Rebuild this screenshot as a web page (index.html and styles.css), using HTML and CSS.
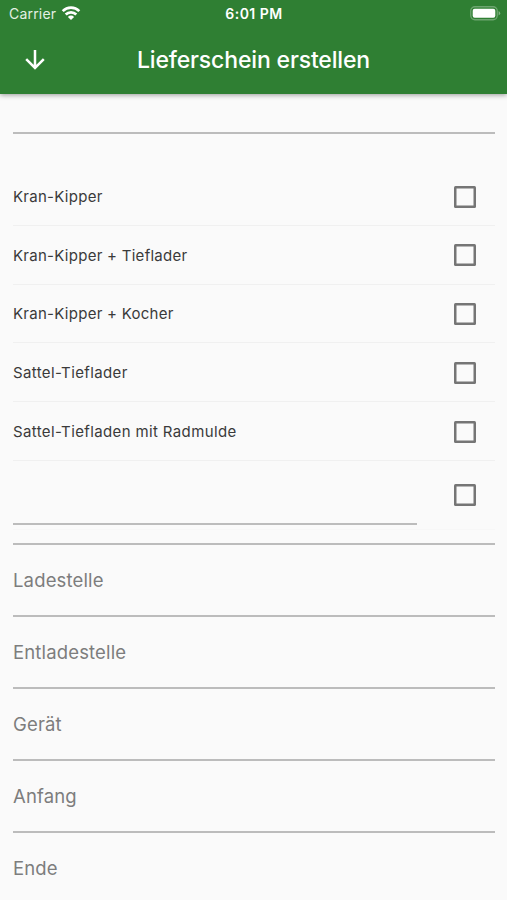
FILE: index.html
```html
<!DOCTYPE html>
<html lang="de">
<head>
<meta charset="utf-8">
<title>Lieferschein erstellen</title>
<link rel="stylesheet" href="styles.css">
</head>
<body>
<header class="appbar">
  <div class="status">
    <div class="network"><span class="carrier">Carrier</span>
      <svg class="wifi" width="20" height="16" viewBox="0 0 20 16"><g fill="none" stroke="#fff" stroke-width="2.7"><path d="M1.7 6.1a11.7 11.7 0 0 1 16.6 0"/><path d="M4.7 9.5a7.5 7.5 0 0 1 10.6 0"/></g><path fill="#fff" d="M10 15l-3.1-3.1a4.4 4.4 0 0 1 6.2 0z"/></svg>
    </div>
    <span class="clock">6:01 PM</span>
    <svg class="battery" width="31" height="15" viewBox="0 0 31 15"><rect x=".75" y=".75" width="26.5" height="13" rx="4.2" fill="none" stroke="#fff" stroke-opacity=".3" stroke-width="1.3"/><rect x="2.7" y="2.7" width="22.6" height="9.1" rx="2" fill="#fff"/><path d="M28.6 5v4.6q1.6-.8 1.6-2.3T28.6 5z" fill="#fff" fill-opacity=".4"/></svg>
  </div>
  <div class="toolbar">
    <svg class="back" width="20" height="20" viewBox="0 0 20 20" fill="none" stroke="#fff" stroke-width="2.5"><path d="M10 0v18M1.2 9.2l8.8 8.8 8.8-8.8"/></svg>
    <h1 class="title">Lieferschein erstellen</h1>
  </div>
</header>
<main class="form">
  <div class="field first"></div>
  <div class="options">
    <label class="option"><span>Kran-Kipper</span><i class="box"></i></label>
    <label class="option"><span>Kran-Kipper + Tieflader</span><i class="box"></i></label>
    <label class="option"><span>Kran-Kipper + Kocher</span><i class="box"></i></label>
    <label class="option wide"><span>Sattel-Tieflader</span><i class="box"></i></label>
    <label class="option wide"><span>Sattel-Tiefladen mit Radmulde</span><i class="box"></i></label>
    <div class="option custom"><div class="entry"></div><i class="box"></i></div>
  </div>
  <div class="field spacer"></div>
  <div class="field">Ladestelle</div>
  <div class="field">Entladestelle</div>
  <div class="field">Gerät</div>
  <div class="field">Anfang</div>
  <div class="field">Ende</div>
</main>
</body>
</html>
```
FILE: styles.css
```css
* { box-sizing: border-box; }
body {
  margin: 0;
  height: 900px;
  overflow: hidden;
  background: #fafafa;
  font-family: Inter, "Liberation Sans", sans-serif;
}
.appbar {
  height: 94px;
  background: #2f7f33;
  color: #fff;
  box-shadow: 0 1px 5px rgba(0, 0, 0, .4);
}
.status {
  height: 27px;
  padding: 0 6px 0 9px;
  display: grid;
  grid-template-columns: 1fr auto 1fr;
  align-items: center;
}
.network { display: flex; align-items: center; }
.carrier { font-size: 14px; letter-spacing: .2px; color: #e4f0e4; width: 52px; }
.wifi { margin-top: -2px; }
.clock { font-size: 14px; font-weight: 600; letter-spacing: .5px; margin-right: 2px; }
.battery { justify-self: end; }
.toolbar {
  height: 65px;
  padding: 0 25px;
  display: grid;
  grid-template-columns: 20px 1fr 20px;
  align-items: center;
}
.title {
  margin: 0;
  text-align: center;
  font-size: 23px;
  font-weight: 500;
  line-height: 28px;
  letter-spacing: -.15px;
  white-space: nowrap;
}
.form { padding: 0 12px 0 13px; }
.field {
  height: 72px;
  padding-top: 21px;
  border-bottom: 2px solid #bcbcbc;
  color: #7d7d7d;
  font-size: 18.5px;
  line-height: 29px;
  letter-spacing: .15px;
}
.first { height: 40px; padding: 0; }
.options { padding-top: 33px; }
.option {
  height: 58.75px;
  padding: 1px 18px 0 0;
  display: flex;
  align-items: center;
  justify-content: space-between;
  border-bottom: 1px solid #f0f0f0;
  color: #3a3a3a;
  font-size: 15px;
  letter-spacing: .27px;
}
.wide { letter-spacing: .37px; }
.box {
  width: 22px;
  height: 22px;
  margin: .5px 1px 0 0;
  border-radius: 1.5px;
  box-shadow: inset 0 0 0 2.5px #757575;
}
.custom { height: 69px; padding-top: 0; border-bottom-color: #f7f7f7; }
.entry { width: 404px; height: 64px; border-bottom: 2px solid #bcbcbc; align-self: flex-start; }
.spacer { height: 15px; padding: 0; }
```
